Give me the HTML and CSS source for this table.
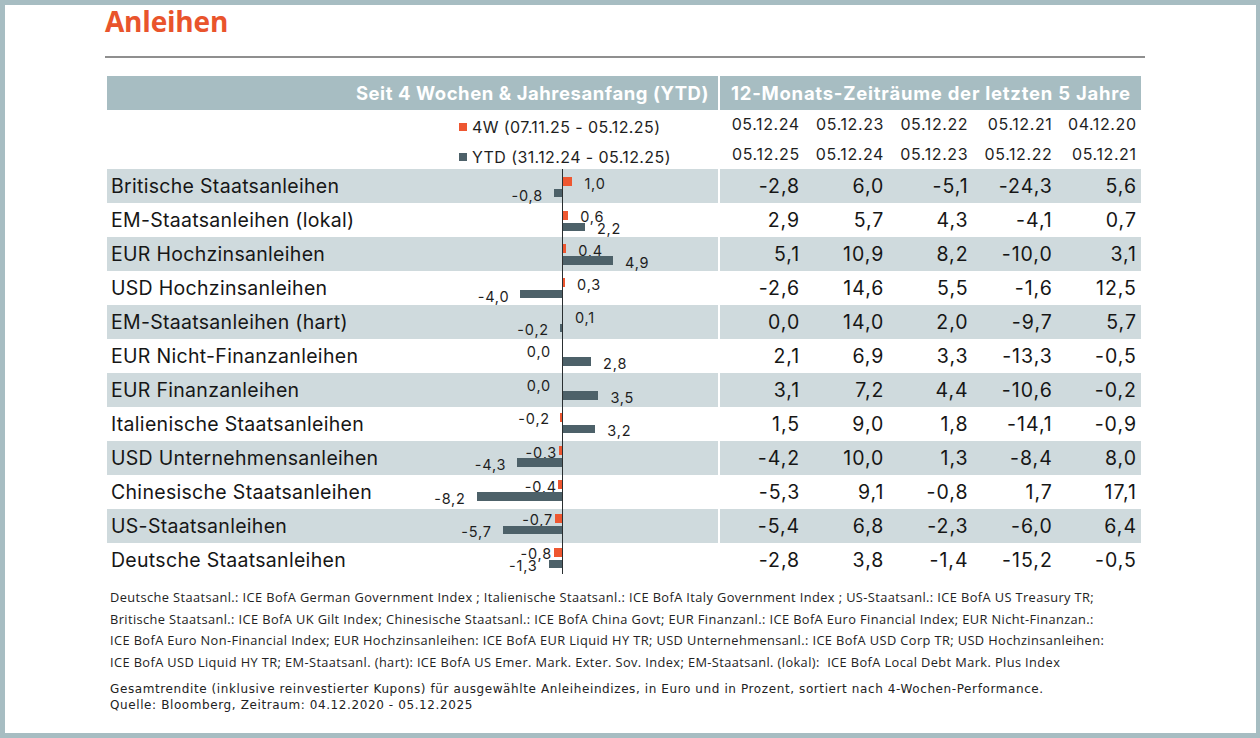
FILE: index.html
```html
<!DOCTYPE html>
<html lang="de">
<head>
<meta charset="utf-8">
<title>Anleihen</title>
<link rel="stylesheet" href="styles.css">
</head>
<body>
<div class="panel">
  <h1 class="title">Anleihen</h1>
  <div class="rule"></div>

  <div class="table">
    <div class="row head">
      <div class="cell-left">Seit 4 Wochen &amp; Jahresanfang (YTD)</div>
      <div class="cell-right">12-Monats-Zeiträume der letzten 5 Jahre</div>
    </div>

    <div class="row legend">
      <div class="cell-left">
        <div class="legend-item"><span class="sw sw-4w"></span>4W (07.11.25 - 05.12.25)</div>
        <div class="legend-item"><span class="sw sw-ytd"></span>YTD (31.12.24 - 05.12.25)</div>
      </div>
      <div class="cell-right">
        <div class="dates">
          <span>05.12.24</span><span>05.12.23</span><span>05.12.22</span><span>05.12.21</span><span>04.12.20</span>
        </div>
        <div class="dates">
          <span>05.12.25</span><span>05.12.24</span><span>05.12.23</span><span>05.12.22</span><span>05.12.21</span>
        </div>
      </div>
    </div>

    <div class="body">
      <div class="axis"></div>

      <div class="row data band">
        <div class="cell-left"><span class="name">Britische Staatsanleihen</span>
          <div class="chart" style="top:1.6px">
            <span class="bar b4w" style="left:455px;width:10.4px"></span><span class="val v4w" style="left:477.4px">1,0</span>
            <span class="bar bytd" style="left:446.7px;width:8.3px"></span><span class="val vytd" style="right:175px">-0,8</span>
          </div>
        </div>
        <div class="cell-right nums"><span>-2,8</span><span>6,0</span><span>-5,1</span><span>-24,3</span><span>5,6</span></div>
      </div>

      <div class="row data">
        <div class="cell-left"><span class="name">EM-Staatsanleihen (lokal)</span>
          <div class="chart" style="top:1.3px">
            <span class="bar b4w" style="left:455px;width:6.2px"></span><span class="val v4w" style="left:473.2px">0,6</span>
            <span class="bar bytd" style="left:455px;width:22.9px"></span><span class="val vytd" style="left:489.9px">2,2</span>
          </div>
        </div>
        <div class="cell-right nums"><span>2,9</span><span>5,7</span><span>4,3</span><span>-4,1</span><span>0,7</span></div>
      </div>

      <div class="row data band">
        <div class="cell-left"><span class="name">EUR Hochzinsanleihen</span>
          <div class="chart" style="top:1px">
            <span class="bar b4w" style="left:455px;width:4.2px"></span><span class="val v4w" style="left:471.2px">0,4</span>
            <span class="bar bytd" style="left:455px;width:51px"></span><span class="val vytd" style="left:518px">4,9</span>
          </div>
        </div>
        <div class="cell-right nums"><span>5,1</span><span>10,9</span><span>8,2</span><span>-10,0</span><span>3,1</span></div>
      </div>

      <div class="row data">
        <div class="cell-left"><span class="name">USD Hochzinsanleihen</span>
          <div class="chart" style="top:0.6px">
            <span class="bar b4w" style="left:455px;width:3.1px"></span><span class="val v4w" style="left:470.1px">0,3</span>
            <span class="bar bytd" style="left:413.4px;width:41.6px"></span><span class="val vytd" style="right:208.6px">-4,0</span>
          </div>
        </div>
        <div class="cell-right nums"><span>-2,6</span><span>14,6</span><span>5,5</span><span>-1,6</span><span>12,5</span></div>
      </div>

      <div class="row data band">
        <div class="cell-left"><span class="name">EM-Staatsanleihen (hart)</span>
          <div class="chart" style="top:0.3px">
            <span class="bar b4w" style="left:455px;width:1px"></span><span class="val v4w" style="left:468px">0,1</span>
            <span class="bar bytd" style="left:452.9px;width:2.1px"></span><span class="val vytd" style="right:169px">-0,2</span>
          </div>
        </div>
        <div class="cell-right nums"><span>0,0</span><span>14,0</span><span>2,0</span><span>-9,7</span><span>5,7</span></div>
      </div>

      <div class="row data">
        <div class="cell-left"><span class="name">EUR Nicht-Finanzanleihen</span>
          <div class="chart" style="top:0px">
            <span class="val v4w" style="right:167px">0,0</span>
            <span class="bar bytd" style="left:455px;width:29.1px"></span><span class="val vytd" style="left:496.1px">2,8</span>
          </div>
        </div>
        <div class="cell-right nums"><span>2,1</span><span>6,9</span><span>3,3</span><span>-13,3</span><span>-0,5</span></div>
      </div>

      <div class="row data band">
        <div class="cell-left"><span class="name">EUR Finanzanleihen</span>
          <div class="chart" style="top:-0.3px">
            <span class="val v4w" style="right:167px">0,0</span>
            <span class="bar bytd" style="left:455px;width:36.4px"></span><span class="val vytd" style="left:503.4px">3,5</span>
          </div>
        </div>
        <div class="cell-right nums"><span>3,1</span><span>7,2</span><span>4,4</span><span>-10,6</span><span>-0,2</span></div>
      </div>

      <div class="row data">
        <div class="cell-left"><span class="name">Italienische Staatsanleihen</span>
          <div class="chart" style="top:-0.6px">
            <span class="bar b4w" style="left:452.9px;width:2.1px"></span><span class="val v4w" style="right:168px">-0,2</span>
            <span class="bar bytd" style="left:455px;width:33.3px"></span><span class="val vytd" style="left:500.3px">3,2</span>
          </div>
        </div>
        <div class="cell-right nums"><span>1,5</span><span>9,0</span><span>1,8</span><span>-14,1</span><span>-0,9</span></div>
      </div>

      <div class="row data band">
        <div class="cell-left"><span class="name">USD Unternehmensanleihen</span>
          <div class="chart" style="top:-1px">
            <span class="bar b4w" style="left:451.9px;width:3.1px"></span><span class="val v4w" style="right:161px">-0,3</span>
            <span class="bar bytd" style="left:410.3px;width:44.7px"></span><span class="val vytd" style="right:211.7px">-4,3</span>
          </div>
        </div>
        <div class="cell-right nums"><span>-4,2</span><span>10,0</span><span>1,3</span><span>-8,4</span><span>8,0</span></div>
      </div>

      <div class="row data">
        <div class="cell-left"><span class="name">Chinesische Staatsanleihen</span>
          <div class="chart" style="top:-1.3px">
            <span class="bar b4w" style="left:450.8px;width:4.2px"></span><span class="val v4w" style="right:161px">-0,4</span>
            <span class="bar bytd" style="left:369.7px;width:85.3px"></span><span class="val vytd" style="right:252.3px">-8,2</span>
          </div>
        </div>
        <div class="cell-right nums"><span>-5,3</span><span>9,1</span><span>-0,8</span><span>1,7</span><span>17,1</span></div>
      </div>

      <div class="row data band">
        <div class="cell-left"><span class="name">US-Staatsanleihen</span>
          <div class="chart" style="top:-1.6px">
            <span class="bar b4w" style="left:447.7px;width:7.3px"></span><span class="val v4w" style="right:165px">-0,7</span>
            <span class="bar bytd" style="left:395.7px;width:59.3px"></span><span class="val vytd" style="right:226.3px">-5,7</span>
          </div>
        </div>
        <div class="cell-right nums"><span>-5,4</span><span>6,8</span><span>-2,3</span><span>-6,0</span><span>6,4</span></div>
      </div>

      <div class="row data">
        <div class="cell-left"><span class="name">Deutsche Staatsanleihen</span>
          <div class="chart" style="top:-1.9px">
            <span class="bar b4w" style="left:446.7px;width:8.3px"></span><span class="val v4w" style="right:166px">-0,8</span>
            <span class="bar bytd" style="left:441.5px;width:13.5px"></span><span class="val vytd" style="right:180.5px">-1,3</span>
          </div>
        </div>
        <div class="cell-right nums"><span>-2,8</span><span>3,8</span><span>-1,4</span><span>-15,2</span><span>-0,5</span></div>
      </div>
    </div>
  </div>

  <div class="sources">
    <p>Deutsche Staatsanl.: ICE BofA German Government Index ; Italienische Staatsanl.: ICE BofA Italy Government Index ; US-Staatsanl.: ICE BofA US Treasury TR;</p>
    <p>Britische Staatsanl.: ICE BofA UK Gilt Index; Chinesische Staatsanl.: ICE BofA China Govt; EUR Finanzanl.: ICE BofA Euro Financial Index; EUR Nicht-Finanzan.:</p>
    <p>ICE BofA Euro Non-Financial Index; EUR Hochzinsanleihen: ICE BofA EUR Liquid HY TR; USD Unternehmensanl.: ICE BofA USD Corp TR; USD Hochzinsanleihen:</p>
    <p>ICE BofA USD Liquid HY TR; EM-Staatsanl. (hart): ICE BofA US Emer. Mark. Exter. Sov. Index; EM-Staatsanl. (lokal):&nbsp; ICE BofA Local Debt Mark. Plus Index</p>
  </div>

  <div class="notes">
    <p>Gesamtrendite (inklusive reinvestierter Kupons) für ausgewählte Anleiheindizes, in Euro und in Prozent, sortiert nach 4-Wochen-Performance.</p>
    <p>Quelle: Bloomberg, Zeitraum: 04.12.2020 - 05.12.2025</p>
  </div>
</div>
</body>
</html>
```
FILE: styles.css
```css
* { box-sizing: border-box; }

html, body {
  margin: 0;
  padding: 0;
}

body {
  background: #a7bdc2;
  width: 1260px;
  height: 738px;
  overflow: hidden;
  font-family: Inter, "Open Sans", sans-serif;
  color: #1e1e1e;
}

.panel {
  margin: 5px 4px 0 5px;
  height: 728px;
  background: #ffffff;
  padding: 0 0 0 100px;
}

.title {
  margin: 0;
  height: 40px;
  font-family: "Open Sans", sans-serif;
  font-size: 28px;
  line-height: 32px;
  font-weight: 700;
  color: #e9542c;
  letter-spacing: -0.2px;
}

.rule {
  width: 1040px;
  height: 2px;
  margin-top: 11px;
  background: #8f8f8f;
}

.table {
  margin-top: 18px;
  margin-left: 2px;
  width: 1034px;
}

.row {
  display: grid;
  grid-template-columns: 611px 421px;
  column-gap: 2px;
}

.head {
  height: 33px;
  color: #ffffff;
  font-weight: 700;
  font-size: 18.5px;
  letter-spacing: 0.55px;
  line-height: 34px;
}

.head .cell-left,
.head .cell-right {
  background: #a7bdc2;
}

.head .cell-left {
  text-align: right;
  padding-right: 9px;
}

.head .cell-right {
  padding-left: 11px;
  letter-spacing: 0.75px;
}

.legend {
  height: 60px;
}

.legend .cell-left {
  padding-left: 352px;
  font-size: 16px;
  letter-spacing: 0.4px;
}

.legend-item {
  height: 30px;
  padding-top: 5px;
  display: flex;
  align-items: center;
}

.sw {
  display: inline-block;
  width: 8px;
  height: 8px;
  margin-right: 5px;
}

.sw-4w { background: #ee5731; }
.sw-ytd { background: #4d6169; }

.dates {
  display: grid;
  grid-template-columns: repeat(5, 1fr);
  height: 30px;
  line-height: 30px;
  font-size: 16px;
  letter-spacing: 0.6px;
}

.dates span {
  text-align: right;
  padding-right: 4.4px;
}

.body {
  position: relative;
}

.axis {
  position: absolute;
  left: 454.5px;
  top: 0;
  bottom: 3px;
  width: 1.5px;
  background: #2a2f31;
  z-index: 2;
}

.data {
  height: 34px;
}

.data .cell-left {
  position: relative;
  height: 34px;
}

.band .cell-left,
.band .cell-right {
  background: #cfdadd;
}

.name {
  display: block;
  padding-left: 4px;
  font-size: 19.5px;
  letter-spacing: 0.3px;
  line-height: 34px;
  color: #161616;
}

.chart {
  position: absolute;
  left: 0;
  right: 0;
  height: 34px;
}

.bar {
  position: absolute;
  height: 9px;
}

.b4w {
  top: 6.4px;
  background: #ee5731;
}

.bytd {
  top: 18.4px;
  height: 8.5px;
  background: #4d6169;
}

.val {
  position: absolute;
  font-size: 14.5px;
  letter-spacing: 0.8px;
  line-height: 14px;
  color: #1e1e1e;
  white-space: nowrap;
}

.v4w { top: 6px; }
.vytd { top: 18px; }

.nums {
  display: grid;
  grid-template-columns: repeat(5, 1fr);
  font-size: 19.5px;
  letter-spacing: 1px;
  line-height: 34px;
  color: #161616;
}

.nums span {
  text-align: right;
  padding-right: 4px;
}

.sources {
  margin-top: 10px;
  padding-left: 5px;
  font-family: "Open Sans", sans-serif;
  font-size: 12.8px;
  letter-spacing: 0.4px;
  color: #222;
}

.sources p {
  margin: 0;
  height: 21.5px;
  line-height: 21.5px;
  white-space: nowrap;
}

.notes {
  margin-top: 8px;
  padding-left: 5px;
  font-family: "DejaVu Sans", Verdana, sans-serif;
  font-size: 12px;
  letter-spacing: 0.6px;
  color: #222;
}

.notes p {
  margin: 0;
  line-height: 16px;
  white-space: nowrap;
}
```
